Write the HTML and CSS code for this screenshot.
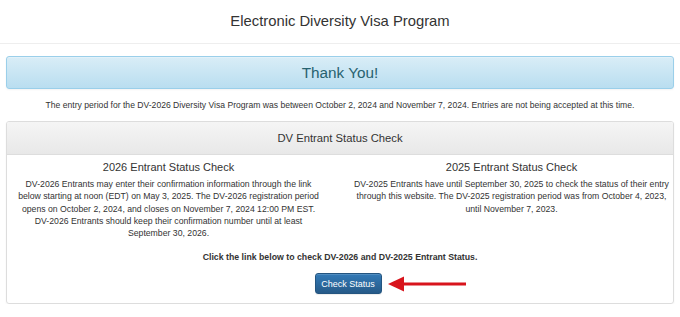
FILE: index.html
```html
<!DOCTYPE html>
<html lang="en">
<head>
<meta charset="utf-8">
<title>Electronic Diversity Visa Program</title>
<link rel="stylesheet" href="styles.css">
</head>
<body>
<header class="site-header">
  <h1 class="site-title">Electronic Diversity Visa Program</h1>
</header>
<main class="content">
  <div class="alert-info">Thank You!</div>
  <p class="notice">The entry period for the DV-2026 Diversity Visa Program was between October 2, 2024 and November 7, 2024. Entries are not being accepted at this time.</p>
  <section class="panel">
    <div class="panel-heading">DV Entrant Status Check</div>
    <div class="panel-body">
      <div class="row">
        <div class="col">
          <h2 class="col-title">2026 Entrant Status Check</h2>
          <p class="col-text">DV-2026 Entrants may enter their confirmation information through the link<br>below starting at noon (EDT) on May 3, 2025. The DV-2026 registration period<br>opens on October 2, 2024, and closes on November 7, 2024 12:00 PM EST.<br>DV-2026 Entrants should keep their confirmation number until at least<br>September 30, 2026.</p>
        </div>
        <div class="col">
          <h2 class="col-title">2025 Entrant Status Check</h2>
          <p class="col-text">DV-2025 Entrants have until September 30, 2025 to check the status of their entry<br>through this website. The DV-2025 registration period was from October 4, 2023,<br>until November 7, 2023.</p>
        </div>
      </div>
      <p class="cta-text">Click the link below to check DV-2026 and DV-2025 Entrant Status.</p>
      <div class="cta">
        <span class="btn-wrap">
          <a class="btn-primary" href="#">Check Status</a>
          <svg class="arrow" width="80" height="16" viewBox="0 0 80 16" aria-hidden="true">
            <path d="M0 8 L16 0.5 L16 15.5 Z" fill="#d8141c"/>
            <rect x="14" y="6.5" width="64" height="3" fill="#d8141c"/>
          </svg>
        </span>
      </div>
    </div>
  </section>
</main>
</body>
</html>
```

FILE: styles.css
```css
html, body {
  margin: 0;
  padding: 0;
  background: #fff;
}
body {
  font-family: "Liberation Sans", Arial, sans-serif;
  font-size: 8.6px;
  color: #333;
}
.site-header {
  height: 43px;
  border-bottom: 1px solid #eee;
  display: flex;
  align-items: center;
  justify-content: center;
}
.site-title {
  margin: 0;
  font-size: 14.8px;
  font-weight: normal;
  color: #333;
  line-height: 1;
}
.content {
  padding: 0 6px;
}
.alert-info {
  margin-top: 12px;
  height: 31px;
  border: 1px solid #9acfea;
  border-radius: 3px;
  background: linear-gradient(to bottom, #d9edf7 0%, #b9def0 100%);
  box-shadow: inset 0 1px 0 rgba(255,255,255,.25), 0 1px 2px rgba(0,0,0,.05);
  color: #27626f;
  font-size: 15.3px;
  display: flex;
  align-items: center;
  justify-content: center;
}
.notice {
  margin: 10px 0 0;
  line-height: 12px;
  text-align: center;
}
.panel {
  margin-top: 10px;
  border: 1px solid #ddd;
  border-radius: 3px;
  box-shadow: 0 1px 2px rgba(0,0,0,.05);
}
.panel-heading {
  height: 32px;
  border-bottom: 1px solid #ddd;
  background: linear-gradient(to bottom, #f5f5f5 0%, #e8e8e8 100%);
  border-radius: 2px 2px 0 0;
  font-size: 11.25px;
  color: #333;
  display: flex;
  align-items: center;
  justify-content: center;
}
.panel-body {
  padding: 5px 0 9px;
}
.row {
  display: grid;
  grid-template-columns: 1fr 1fr;
  margin: 0 -10px 0 -10px;
}
.col {
  padding: 0 4px;
  text-align: center;
  white-space: nowrap;
}
.col-title {
  margin: 0;
  font-size: 11px;
  font-weight: normal;
  line-height: 14px;
}
.col-text {
  margin: 4px 0 0;
  font-size: 8.7px;
  line-height: 12.3px;
}
.cta-text {
  margin: 12px 0 0;
  text-align: center;
  font-weight: bold;
  font-size: 8.75px;
  line-height: 12px;
}
.cta {
  margin-top: 10px;
  display: flex;
  justify-content: center;
}
.btn-wrap {
  position: relative;
  margin-left: 16px;
}
.btn-primary {
  display: flex;
  align-items: center;
  justify-content: center;
  box-sizing: border-box;
  width: 67px;
  height: 21px;
  border: 1px solid #245580;
  border-radius: 3px;
  background: linear-gradient(to bottom, #337ab7 0%, #265a88 100%);
  box-shadow: inset 0 1px 0 rgba(255,255,255,.15), 0 1px 1px rgba(0,0,0,.075);
  color: #fff;
  font-size: 9px;
  text-decoration: none;
}
.arrow {
  position: absolute;
  left: 73px;
  top: 2.5px;
}
```
